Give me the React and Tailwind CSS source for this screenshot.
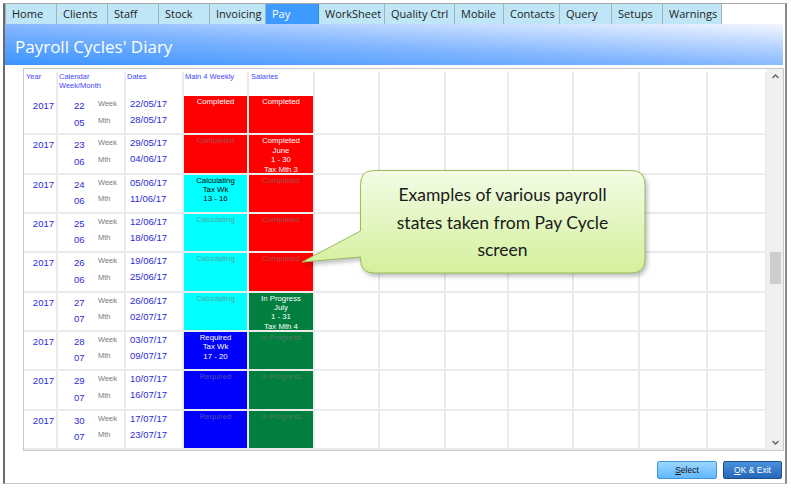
import React from "react";

const tabs = [
  ["Home", 52], ["Clients", 51], ["Staff", 51], ["Stock", 51], ["Invoicing", 56], ["Pay", 53],
  ["WorkSheet", 66], ["Quality Ctrl", 70], ["Mobile", 49], ["Contacts", 56], ["Query", 52],
  ["Setups", 51], ["Warnings", 59],
];

const BG = {
  red: "bg-[#ff0000]",
  cyan: "bg-[#00ffff]",
  blue: "bg-[#0000ff]",
  green: "bg-[#007f3f]",
};
const ON = {
  red: "text-white",
  cyan: "text-black",
  blue: "text-white",
  green: "text-white",
};

const rows = [
  { wk: "22", m: "05", d1: "22/05/17", d2: "28/05/17", main: ["red", true, ["Completed"]], sal: ["red", true, ["Completed"]] },
  { wk: "23", m: "06", d1: "29/05/17", d2: "04/06/17", main: ["red", false, ["Completed"]], sal: ["red", true, ["Completed", "June", "1 - 30", "Tax Mth 3"]] },
  { wk: "24", m: "06", d1: "05/06/17", d2: "11/06/17", main: ["cyan", true, ["Calculating", "Tax Wk", "13 - 16"]], sal: ["red", false, ["Completed"]] },
  { wk: "25", m: "06", d1: "12/06/17", d2: "18/06/17", main: ["cyan", false, ["Calculating"]], sal: ["red", false, ["Completed"]] },
  { wk: "26", m: "06", d1: "19/06/17", d2: "25/06/17", main: ["cyan", false, ["Calculating"]], sal: ["red", false, ["Completed"]] },
  { wk: "27", m: "07", d1: "26/06/17", d2: "02/07/17", main: ["cyan", false, ["Calculating"]], sal: ["green", true, ["In Progress", "July", "1 - 31", "Tax Mth 4"]] },
  { wk: "28", m: "07", d1: "03/07/17", d2: "09/07/17", main: ["blue", true, ["Required", "Tax Wk", "17 - 20"]], sal: ["green", false, ["In Progress"]] },
  { wk: "29", m: "07", d1: "10/07/17", d2: "16/07/17", main: ["blue", false, ["Required"]], sal: ["green", false, ["In Progress"]] },
  { wk: "30", m: "07", d1: "17/07/17", d2: "23/07/17", main: ["blue", false, ["Required"]], sal: ["green", false, ["In Progress"]] },
];

const emptyCols = [65, 66, 63, 65, 66, 68, 59];

function StateCell({ w, spec }) {
  const [c, on, lines] = spec;
  return (
    <div className="h-full border-r-2 border-[#ebebeb]" style={{ width: w }}>
      <div className={`h-full ${BG[c]} ${on ? ON[c] : "text-[#777777]/70"} pt-[1px] text-center text-[7.8px] leading-[9.4px]`}>
        {lines.map((l, i) => (
          <div key={i}>{l}</div>
        ))}
      </div>
    </div>
  );
}

function DataRow({ r }) {
  return (
    <div className="flex h-[39.33px] border-b-2 border-[#ebebeb]">
      <div className="w-[34px] border-r-2 border-[#ebebeb] pt-[2px] pr-[2px] text-right text-[9.5px] leading-[15px] text-[#2b2bdc]">2017</div>
      <div className="flex w-[68px] border-r-2 border-[#ebebeb]">
        <div className="w-[40px] pl-[16px] pt-[2px] text-[9.5px] leading-[16.5px] text-[#2b2bdc]">
          <div>{r.wk}</div>
          <div>{r.m}</div>
        </div>
        <div className="text-[7.5px] leading-[16.5px] text-[#7a7a7a]">
          <div>Week</div>
          <div>Mth</div>
        </div>
      </div>
      <div className="w-[58px] border-r-2 border-[#ebebeb] pl-[4px] text-[9.5px] leading-[16px] text-[#2b2bdc]">
        <div>{r.d1}</div>
        <div>{r.d2}</div>
      </div>
      <StateCell w={65} spec={r.main} />
      <StateCell w={66} spec={r.sal} />
      {emptyCols.map((w, i) => (
        <div key={i} className="h-full border-r-2 border-[#ebebeb]" style={{ width: w }} />
      ))}
    </div>
  );
}

function Chevron({ up }) {
  return (
    <svg width="7" height="5" viewBox="0 0 7 5" className="block">
      <polyline
        points={up ? "0.5,4 3.5,1 6.5,4" : "0.5,1 3.5,4 6.5,1"}
        fill="none"
        stroke="#606060"
        strokeWidth="1.3"
      />
    </svg>
  );
}

export default function App() {
  return (
    <div className="relative h-[488px] w-[791px] overflow-hidden bg-white pl-[3px] pt-[3px] font-['Liberation_Sans',Arial,sans-serif]">
      <div className="flex h-[481px] w-[784px] flex-col border-b border-l-2 border-r-2 border-t border-b-[#c8c8c8] border-l-[#6a6a6a] border-r-[#8a8a8a] border-t-[#a8a8a8]">
        {/* tabs */}
        <div className="flex h-[20px] font-['Open_Sans',sans-serif] text-[11px]">
          {tabs.map(([t, w], i) => (
            <div
              key={t}
              style={{ width: w }}
              className={`flex h-full items-center whitespace-nowrap pl-[6px] ${i === 0 ? "border-l border-l-[#9fb3bd]" : ""} border-r ${
                t === "Pay"
                  ? "border-r-[#2f86e0] bg-[#3d9bff] text-white"
                  : "border-r-[#9fb3bd] bg-[#bfe6f6] text-[#222]"
              }`}
            >
              {t}
            </div>
          ))}
        </div>
        {/* header band */}
        <div className="mr-[2px] flex h-[41px] items-center bg-[linear-gradient(3deg,#3a94ff_0%,#7fb4ff_45%,#f2f6ff_100%)] pl-[10px] pt-[4px] font-['Open_Sans',sans-serif] text-[17px] text-white">
          Payroll Cycles' Diary
        </div>
        {/* grid */}
        <div className="ml-[18px] mt-[3px] flex h-[383px] w-[761px] border border-[#c8c8c8]">
          <div className="w-[743px] overflow-hidden">
            <div className="flex h-[27px] pt-[3px] text-[7.5px] leading-[9px] text-[#4646ff]">
              <div className="w-[34px] border-r-2 border-[#ebebeb] pl-[2px]">Year</div>
              <div className="w-[68px] border-r-2 border-[#ebebeb] pl-[1px]">
                Calendar
                <br />
                Week/Month
              </div>
              <div className="w-[58px] border-r-2 border-[#ebebeb] pl-[1px]">Dates</div>
              <div className="w-[65px] border-r-2 border-[#ebebeb] pl-[1px]">Main 4 Weekly</div>
              <div className="w-[66px] border-r-2 border-[#ebebeb] pl-[2px]">Salaries</div>
              {emptyCols.map((w, i) => (
                <div key={i} className="border-r-2 border-[#ebebeb]" style={{ width: w }} />
              ))}
            </div>
            {rows.map((r, i) => (
              <DataRow key={i} r={r} />
            ))}
          </div>
          <div className="flex w-[16px] flex-col items-center bg-[#f0f0f0]">
            <div className="pt-[5px]">
              <Chevron up />
            </div>
            <div className="mt-[173px] h-[32px] w-[11px] bg-[#cdcdcd]" />
            <div className="mt-auto pb-[5px]">
              <Chevron />
            </div>
          </div>
        </div>
        {/* buttons */}
        <div className="mt-[10px] flex justify-end gap-[6px] pr-[3px] text-[8.5px]">
          <div className="flex h-[18px] w-[60px] items-center justify-center rounded-[2px] border border-[#3f95e0] bg-[linear-gradient(to_bottom,#9ad6ff,#62b8ff)] text-[#111]">
            <span>
              <span className="underline">S</span>elect
            </span>
          </div>
          <div className="flex h-[18px] w-[59px] items-center justify-center rounded-[2px] border border-[#1d4f8a] bg-[linear-gradient(to_bottom,#4a92dc,#2567b8)] text-white">
            <span>
              <span className="underline">O</span>K &amp; Exit
            </span>
          </div>
        </div>
      </div>

      {/* callout */}
      <svg
        className="absolute left-[300px] top-[165px] drop-shadow-[2px_3px_2px_rgba(0,0,0,0.25)]"
        width="352"
        height="115"
        viewBox="0 0 352 115"
      >
        <defs>
          <linearGradient id="cg" x1="0" y1="0" x2="0" y2="1">
            <stop offset="0" stopColor="#f3fce6" />
            <stop offset="1" stopColor="#d3f09c" />
          </linearGradient>
        </defs>
        <path
          d="M74 5.5 H331 Q345 5.5 345 19.5 V94 Q345 108 331 108 H74 Q60.5 108 60.5 94 V92 L2 97 L60.5 66 V19.5 Q60.5 5.5 74 5.5 Z"
          fill="url(#cg)"
          stroke="#9bbb59"
          strokeWidth="1"
        />
      </svg>
      <div className="absolute left-[360px] top-[170px] flex h-[103px] w-[285px] flex-col items-center pt-[11px] font-['Lato',sans-serif] text-[17.5px] leading-[27.5px] text-[#1a1a1a]">
        <div>Examples of various payroll</div>
        <div>states taken from Pay Cycle</div>
        <div>screen</div>
      </div>
    </div>
  );
}
